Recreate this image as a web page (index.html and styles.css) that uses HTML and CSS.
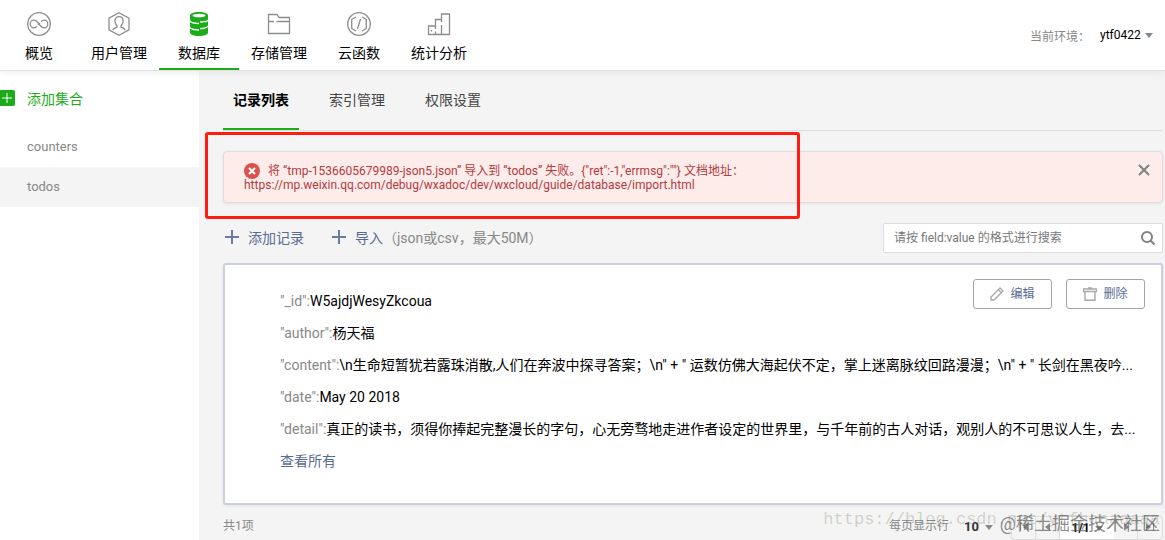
FILE: index.html
```html
<!DOCTYPE html>
<html lang="zh-CN">
<head>
    <meta charset="UTF-8">
    <meta name="viewport" content="width=device-width, initial-scale=1.0">
    <title>数据库</title>
    <link rel="stylesheet" href="styles.css">
</head>
<body>
    <header class="header">
        <nav class="nav">
            <a class="nav-item" href="#">
                <svg class="nav-icon" viewBox="0 0 24 24">
                    <circle cx="12" cy="12" r="11.3"/>
                    <path d="M14.2 9.6C15 8.5 16 8.2 17 8.2a3.8 3.8 0 0 1 0 7.6c-2 0-3.3-1.4-5-3.8S9 8.2 7 8.2a3.8 3.8 0 0 0 0 7.6c1 0 2-.4 2.8-1.4M11 12.8l2-1.6"/>
                </svg>
                <span>概览</span>
            </a>
            <a class="nav-item" href="#">
                <svg class="nav-icon" viewBox="0 0 24 24">
                    <path d="M12 .8l10 5.4v11.6l-10 5.4-10-5.4V6.200z"/>
                    <path d="M6 18.200c.2-1.700 1.500-2.200 3.700-2.800.7-.2.700-.9.200-1.600C8.500 12.300 7.900 11 7.900 9c0-2.600 1.600-4.300 4.100-4.300S16.100 6.400 16.100 9c0 2-.6 3.300-2 4.800-.5.7-.5 1.400.2 1.600 2.200.6 3.500 1.100 3.700 2.800"/>
                </svg>
                <span>用户管理</span>
            </a>
            <a class="nav-item active" href="#">
                <svg class="nav-icon" viewBox="0 0 24 24">
                    <path class="fill" d="M3 3.500C3 1.200 7 0 12 0s9 1.200 9 3.500V7c0 1-1.200 1.700-3 2.200v1.300c1.400-.3 2.400-.8 3-1.500v4c0 1.100-1.300 1.900-3 2.300v1.300c1.400-.3 2.400-.8 3-1.500v5.400c0 2.300-4 3.500-9 3.500s-9-1.200-9-3.500v-4c1.800 1.600 5 2.200 9 2.200v-1.400c-5 0-9-1-9-3.300V10c1.800 1.600 5 2.200 9 2.200v-1.400c-5 0-9-1-9-3.300z"/>
                    <ellipse class="hole" cx="12" cy="3.500" rx="6.500" ry="1.700"/>
                    <path class="cut" d="M13 9.900c2 0 3.500-.2 5-.6M13 16.600c2 0 3.500-.2 5-.6"/>
                </svg>
                <span>数据库</span>
            </a>
            <a class="nav-item" href="#">
                <svg class="nav-icon" viewBox="0 0 24 24">
                    <path d="M1.500 21.500v-19h8.500l2 3h10.500v16zM1.500 9.500h5.500M9.500 9.500h13"/>
                </svg>
                <span>存储管理</span>
            </a>
            <a class="nav-item" href="#">
                <svg class="nav-icon" viewBox="0 0 24 24">
                    <circle cx="12" cy="12" r="11.3"/>
                    <path d="M9 5L4.700 7.500v9L9 19M15 5l4.300 2.500v9L15 19M13.600 7l-3.200 10"/>
                </svg>
                <span>云函数</span>
            </a>
            <a class="nav-item" href="#">
                <svg class="nav-icon" viewBox="0 0 24 24">
                    <path d="M8.500 17v-3h-7v8.500h21V2h-8v8M8.500 14V7.500h6M14.500 13v9.500M8.500 19.500v3M4.500 18v1.500"/>
                </svg>
                <span>统计分析</span>
            </a>
        </nav>
        <div class="env">
            <label class="env-label" for="env">当前环境：</label>
            <span class="select-wrap">
                <select id="env"><option>ytf0422</option></select>
            </span>
        </div>
    </header>

    <div class="layout">
        <aside class="sidebar">
            <button class="add-collection" type="button">
                <svg class="add-icon" viewBox="0 0 16 16">
                    <rect width="16" height="16" rx="2"/>
                    <path d="M8 3v10M3 8h10"/>
                </svg>
                添加集合
            </button>
            <a class="collection" href="#">counters</a>
            <a class="collection selected" href="#">todos</a>
        </aside>

        <main class="main">
            <nav class="tabs">
                <a class="tab active" href="#">记录列表</a>
                <a class="tab" href="#">索引管理</a>
                <a class="tab" href="#">权限设置</a>
            </nav>

            <div class="notice">
                <div class="alert" role="alert">
                    <p class="alert-text">
                        <svg class="error-icon" viewBox="0 0 16 16">
                            <circle cx="8" cy="8" r="8"/>
                            <path d="M5 5l6 6M11 5l-6 6"/>
                        </svg>将 “tmp-1536605679989-json5.json” 导入到 “todos” 失败。{"ret":-1,"errmsg":""} 文档地址：<br>https://mp.weixin.qq.com/debug/wxadoc/dev/wxcloud/guide/database/import.html
                    </p>
                    <button class="close" type="button" aria-label="关闭">
                        <svg viewBox="0 0 12 12"><path d="M1 1l10 10M11 1L1 11"/></svg>
                    </button>
                </div>
                <div class="highlight"></div>
            </div>

            <div class="toolbar">
                <button class="tool" type="button">
                    <svg viewBox="0 0 14 14"><path d="M7 0v14M0 7h14"/></svg>
                    添加记录
                </button>
                <button class="tool" type="button">
                    <svg viewBox="0 0 14 14"><path d="M7 0v14M0 7h14"/></svg>
                    <span>导入<span class="hint">（json或csv，最大50M）</span></span>
                </button>
                <form class="search">
                    <input type="text" aria-label="搜索" placeholder="请按 field:value 的格式进行搜索">
                    <button type="button" aria-label="搜索">
                        <svg viewBox="0 0 14 14"><circle cx="6" cy="6" r="5"/><path d="M9.500 9.500l4 4"/></svg>
                    </button>
                </form>
            </div>

            <section class="record">
                <div class="actions">
                    <button class="btn" type="button">
                        <svg viewBox="0 0 14 14"><path d="M1 13v-3l9-9 3 3-9 9zM8.500 3l2.500 2.500"/></svg>
                        编辑
                    </button>
                    <button class="btn" type="button">
                        <svg viewBox="0 0 14 14"><path d="M2 4.500v8.800h10V4.500M.5 2h13v2.500H.5zM5 1h4"/></svg>
                        删除
                    </button>
                </div>
                <div class="field"><span class="key">"_id":</span>W5ajdjWesyZkcoua</div>
                <div class="field"><span class="key">"author":</span>杨天福</div>
                <div class="field"><span class="key">"content":</span>\n生命短暂犹若露珠消散,人们在奔波中探寻答案；\n" + " 运数仿佛大海起伏不定，掌上迷离脉纹回路漫漫；\n" + " 长剑在黑夜吟...</div>
                <div class="field"><span class="key">"date":</span>May 20 2018</div>
                <div class="field"><span class="key">"detail":</span>真正的读书，须得你捧起完整漫长的字句，心无旁骛地走进作者设定的世界里，与千年前的古人对话，观别人的不可思议人生，去...</div>
                <a class="view-all" href="#">查看所有</a>
            </section>

            <footer class="footer">
                <span class="total">共1项</span>
                <label for="page-size">每页显示行</label>
                <span class="select-wrap size">
                    <select id="page-size"><option>10</option></select>
                </span>
                <div class="pager">
                    <button type="button" aria-label="首页"><svg viewBox="0 0 10 10"><path d="M1 1h1v8H1zM9 1v8L4 5z"/></svg></button>
                    <button type="button" aria-label="上一页"><svg viewBox="0 0 10 10"><path d="M7 1v8L2 5z"/></svg></button>
                    <span class="select-wrap page">
                        <select aria-label="页码"><option>1/1</option></select>
                    </span>
                    <button type="button" aria-label="下一页"><svg viewBox="0 0 10 10"><path d="M3 1v8l5-4z"/></svg></button>
                    <button type="button" aria-label="末页"><svg viewBox="0 0 10 10"><path d="M8 1h1v8H8zM1 1v8l5-4z"/></svg></button>
                </div>
                <span class="watermark blog">https://blog.csdn.net/ytfhaaaaaaa</span>
                <span class="watermark community">@稀土掘金技术社区</span>
            </footer>
        </main>
    </div>
</body>
</html>
```

FILE: styles.css
```css
* {
    box-sizing: border-box;
}
body {
    margin: 0;
    font-family: Roboto, "Noto Sans CJK SC", sans-serif;
    font-size: 14px;
    color: #000;
    background-color: #f4f4f4;
}
a {
    color: inherit;
    text-decoration: none;
}
button, select, input {
    font: inherit;
    color: inherit;
    background: none;
    border: 0;
    padding: 0;
    margin: 0;
}
svg {
    fill: none;
    flex: none;
}

.header {
    position: relative;
    display: flex;
    justify-content: space-between;
    height: 71px;
    background-color: #fff;
    border-bottom: 1px solid #e2e2e2;
    box-shadow: 0 1px 8px rgba(0,0,0,0.08);
}
.nav {
    display: flex;
    margin-left: -1px;
}
.nav-item {
    display: flex;
    flex-direction: column;
    align-items: center;
    gap: 7px;
    width: 80px;
    height: 70px;
    padding-top: 12px;
    line-height: 20px;
}
.nav-item.active {
    border-bottom: 2px solid #1aad19;
}
.nav-icon {
    width: 24px;
    height: 24px;
    stroke: #8d8d8d;
    stroke-width: 1.3;
}
.nav-icon .fill {
    fill: #1aad19;
    stroke: none;
}
.nav-icon .hole {
    fill: #fff;
    stroke: none;
}
.nav-icon .cut {
    stroke: #fff;
}
.env {
    display: flex;
    align-items: center;
    gap: 10px;
    padding-right: 12px;
    font-size: 12px;
}
.env-label {
    color: #888;
}

.select-wrap {
    display: flex;
    align-items: center;
    gap: 4px;
}
.select-wrap select {
    appearance: none;
}
.select-wrap::after {
    content: "";
    border: 4px solid transparent;
    border-top: 5px solid #888;
    border-bottom: 0;
}

.layout {
    display: flex;
}
.sidebar {
    flex: none;
    width: 199px;
    min-height: 469px;
    padding-top: 16px;
    background-color: #fff;
}
.add-collection {
    display: flex;
    align-items: center;
    gap: 12px;
    height: 22px;
    margin: 0 0 18px -1px;
    color: #1aad19;
}
.add-icon {
    width: 16px;
    height: 16px;
    fill: #1aad19;
    stroke: #fff;
}
.add-icon rect {
    stroke: none;
}
.collection {
    display: block;
    height: 40px;
    padding-left: 27px;
    line-height: 40px;
    font-size: 13px;
    color: #888;
}
.collection.selected {
    background-color: #f4f4f4;
}

.main {
    flex: 1;
    min-width: 0;
    padding: 0 2px 0 24px;
}
.tabs {
    display: flex;
    gap: 20px;
    height: 60px;
    border-bottom: 1px solid #e0e0e0;
}
.tab {
    height: 59px;
    padding: 0 10px;
    line-height: 58px;
    color: #444;
}
.tab.active {
    font-weight: bold;
    color: #000;
    border-bottom: 2px solid #1aad19;
}

.notice {
    position: relative;
    padding: 20px 0;
}
.alert {
    display: flex;
    justify-content: space-between;
    min-height: 52px;
    padding: 12px 12px 8px 20px;
    background-color: #fdecea;
    border: 1px solid #e2dcdd;
    border-radius: 4px;
    box-shadow: 0 1px 3px rgba(0,0,0,0.08);
}
.alert-text {
    margin: 0;
    font-size: 12px;
    line-height: 14px;
    color: #b33b40;
}
.error-icon {
    width: 16px;
    height: 16px;
    margin: -4px 8px -4px 0;
    vertical-align: baseline;
    fill: #d9534f;
}
.error-icon path {
    stroke: #fff;
    stroke-width: 2;
}
.close {
    width: 12px;
    height: 12px;
}
.close svg {
    display: block;
    width: 12px;
    height: 12px;
    stroke: #808080;
    stroke-width: 2;
}
/* hand drawn frame around the error message */
.highlight {
    position: absolute;
    top: 1px;
    left: -18px;
    width: 595px;
    height: 87px;
    border: 3px solid #ff1c10;
    border-radius: 3px;
}

.toolbar {
    display: flex;
    align-items: flex-start;
    gap: 28px;
    padding-left: 2px;
    margin-bottom: 10px;
}
.tool {
    display: flex;
    align-items: center;
    gap: 9px;
    height: 28px;
    color: #576b95;
}
.tool svg {
    width: 14px;
    height: 14px;
    stroke: #6b7aa5;
    stroke-width: 2;
}
.hint {
    color: #888;
}
.search {
    display: flex;
    align-items: center;
    width: 280px;
    height: 30px;
    margin-left: auto;
    padding: 0 7px 0 10px;
    background-color: #fff;
    border: 1px solid #dcdcdc;
    border-radius: 2px;
    font-size: 12px;
}
.search input {
    flex: 1;
    min-width: 0;
}
.search input::placeholder {
    color: #777;
}
.search svg {
    display: block;
    width: 14px;
    height: 14px;
    stroke: #808080;
    stroke-width: 2;
}

.record {
    position: relative;
    min-height: 242px;
    padding: 20px 24px 20px 55px;
    background-color: #fff;
    border: 2px solid #cbcfe1;
    border-radius: 3px;
    box-shadow: 0 1px 3px rgba(0,0,0,0.08);
    line-height: 32px;
}
.field {
    overflow: hidden;
    white-space: nowrap;
    text-overflow: ellipsis;
}
.key {
    color: #888;
}
.view-all {
    color: #576b95;
}
.actions {
    position: absolute;
    top: 14px;
    right: 16px;
    display: flex;
    gap: 14px;
}
.btn {
    display: flex;
    align-items: center;
    justify-content: center;
    gap: 6px;
    width: 79px;
    height: 30px;
    border: 1px solid #a5a5a5;
    border-radius: 3px;
    font-size: 12px;
    color: #576b95;
}
.btn svg {
    width: 14px;
    height: 14px;
    stroke: #a8a8a8;
    stroke-width: 1.4;
}

.footer {
    position: relative;
    display: flex;
    align-items: flex-start;
    height: 24px;
    margin-top: 11px;
    font-size: 12px;
    line-height: 20px;
    color: #888;
}
.total {
    margin-right: auto;
}
.size {
    height: 22px;
    margin: 0 18px 0 15px;
    font-size: 13px;
    font-weight: bold;
    color: #333;
    gap: 6px;
}
.pager {
    display: flex;
    height: 24px;
    border: 1px solid #dcdcdc;
    border-radius: 3px;
}
.pager button {
    width: 24px;
    border-right: 1px solid #dcdcdc;
}
.pager button:last-child {
    border-right: 0;
}
.pager svg {
    width: 10px;
    height: 10px;
    fill: #888;
}
.page {
    width: 54px;
    justify-content: center;
    background-color: #fff;
    font-weight: bold;
    color: #000;
}
.watermark {
    position: absolute;
    white-space: nowrap;
    pointer-events: none;
}
.watermark.blog {
    right: 3px;
    top: -6px;
    font-family: "Liberation Mono", monospace;
    font-size: 17px;
    color: rgba(120,120,100,0.3);
}
.watermark.community {
    right: 3px;
    top: -5px;
    font-size: 18px;
    line-height: 26px;
    color: rgba(90,90,90,0.7);
}
```
